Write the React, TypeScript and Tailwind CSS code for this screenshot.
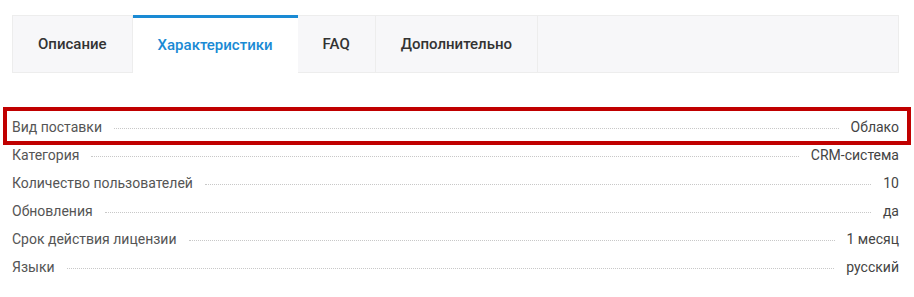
import { useState } from 'react';

const tabs = ['Описание', 'Характеристики', 'FAQ', 'Дополнительно'];

const specs: [string, string][] = [
  ['Вид поставки', 'Облако'],
  ['Категория', 'CRM-система'],
  ['Количество пользователей', '10'],
  ['Обновления', 'да'],
  ['Срок действия лицензии', '1 месяц'],
  ['Языки', 'русский'],
];

function SpecRow({ label, value, highlight }: { label: string; value: string; highlight?: boolean }) {
  return (
    <div className="relative flex items-center h-[28px] text-[14px] text-[#555]">
      <span>{label}</span>
      <span className="flex-1 mx-3 mt-[3px] border-t border-dotted border-[#c8c8c8]" />
      <span className="text-[#444]">{value}</span>
      {highlight && (
        <div className="absolute -left-[9px] -right-[12px] -top-[6px] -bottom-[4px] border-4 border-[#c00000] pointer-events-none" />
      )}
    </div>
  );
}

export default function App() {
  const [active, setActive] = useState(1);

  return (
    <div
      className="w-[914px] h-[297px] bg-white pl-3 pr-[15px] pt-[15px]"
      style={{ fontFamily: 'Roboto, "Noto Sans", sans-serif' }}
    >
      {/* Tabs */}
      <div className="flex h-[58px] bg-[#f7f7f9] border border-[#ededed]">
        {tabs.map((t, i) => (
          <button
            key={t}
            onClick={() => setActive(i)}
            className={
              i === active
                ? 'px-[25px] -my-px border-t-[3px] border-[#1a8ad4] bg-white text-[#1a8ad4] text-[15px] font-medium'
                : 'px-[25px] border-r border-[#ededed] text-[#333] text-[15px] font-medium'
            }
          >
            {t}
          </button>
        ))}
      </div>

      {/* Specs */}
      <div className="mt-[40px]">
        {specs.map(([l, v], i) => (
          <SpecRow key={l} label={l} value={v} highlight={i === 0} />
        ))}
      </div>
    </div>
  );
}
